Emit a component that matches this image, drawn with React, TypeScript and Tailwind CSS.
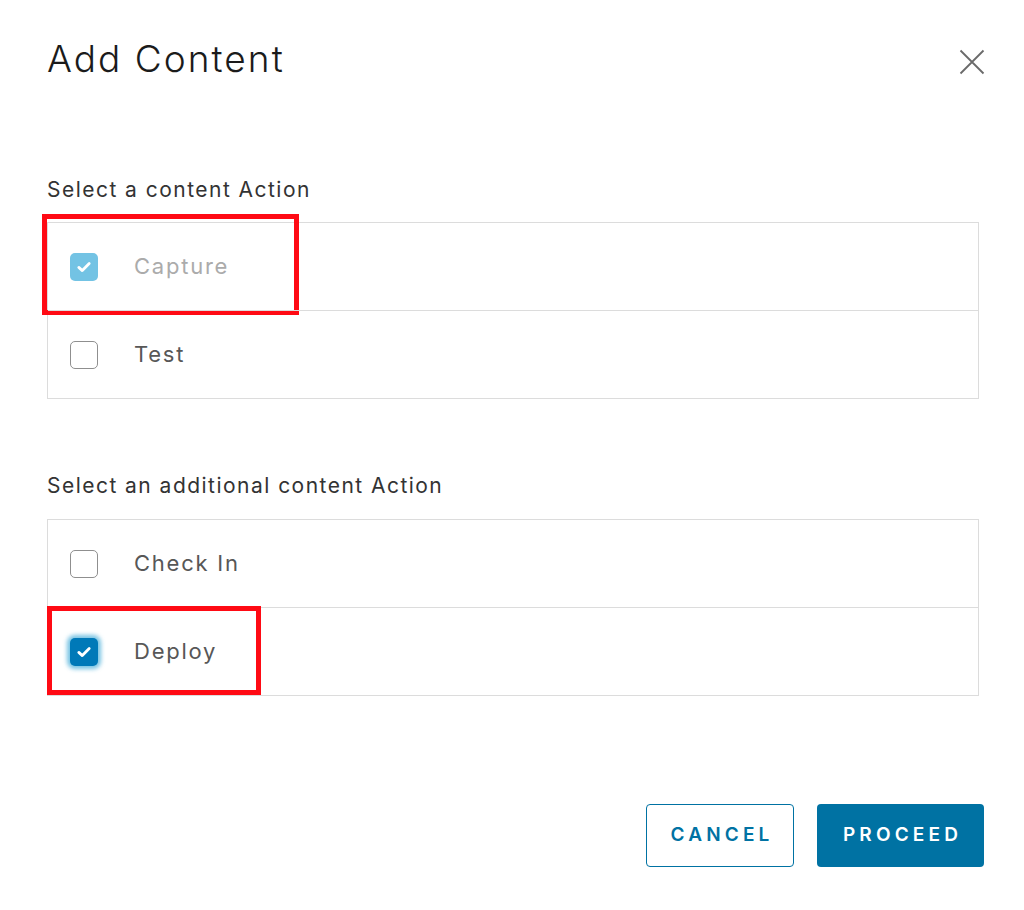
import React, { useState } from "react";

type Option = {
  label: string;
  checked: boolean;
  disabled?: boolean;
  highlight?: "capture" | "deploy";
};

const CheckIcon: React.FC = () => (
  <svg width="16" height="16" viewBox="0 0 16 16" fill="none">
    <path
      d="M2.8 8.4 L6.3 11.6 L13.2 4.6"
      stroke="white"
      strokeWidth="2.8"
      strokeLinecap="round"
      strokeLinejoin="round"
    />
  </svg>
);

const Checkbox: React.FC<{ checked: boolean; disabled?: boolean; focused?: boolean }> = ({
  checked,
  disabled,
  focused,
}) => {
  if (!checked) {
    return (
      <span className="w-[28px] h-[28px] rounded-[5px] border-[1.5px] border-[#8f8f8f] bg-white shrink-0" />
    );
  }
  return (
    <span
      className={
        disabled
          ? "w-[28px] h-[28px] rounded-[5px] bg-[#73c3e4] flex items-center justify-center shrink-0"
          : focused
          ? "w-[28px] h-[28px] rounded-[5px] bg-[#0079b8] flex items-center justify-center shrink-0 shadow-[0_0_4px_3px_rgba(73,175,217,0.75)]"
          : "w-[28px] h-[28px] rounded-[5px] bg-[#0079b8] flex items-center justify-center shrink-0"
      }
    >
      <CheckIcon />
    </span>
  );
};

const OptionList: React.FC<{
  options: Option[];
  onToggle: (i: number) => void;
}> = ({ options, onToggle }) => (
  <div className="border border-[#dcdcdc]">
    {options.map((opt, i) => (
      <div
        key={opt.label}
        onClick={() => !opt.disabled && onToggle(i)}
        className={
          i > 0
            ? "relative h-[88px] flex items-center pl-[22px] border-t border-[#dcdcdc] cursor-pointer"
            : "relative h-[87px] flex items-center pl-[22px] cursor-pointer"
        }
      >
        <Checkbox
          checked={opt.checked}
          disabled={opt.disabled}
          focused={opt.highlight === "deploy"}
        />
        <span
          className={
            opt.disabled
              ? "ml-[36px] text-[22px] tracking-[0.08em] text-[#ababab]"
              : "ml-[36px] text-[22px] tracking-[0.08em] text-[#575757]"
          }
        >
          {opt.label}
        </span>
        {opt.highlight === "capture" && (
          <div className="absolute left-[-6px] top-[-9px] w-[257px] h-[101px] border-[5px] border-[#ff0a14] pointer-events-none" />
        )}
        {opt.highlight === "deploy" && (
          <div className="absolute left-[-1px] top-[-2px] w-[214px] h-[89px] border-[5px] border-[#ff0a14] pointer-events-none" />
        )}
      </div>
    ))}
  </div>
);

export default function App() {
  const [primary, setPrimary] = useState<Option[]>([
    { label: "Capture", checked: true, disabled: true, highlight: "capture" },
    { label: "Test", checked: false },
  ]);
  const [additional, setAdditional] = useState<Option[]>([
    { label: "Check In", checked: false },
    { label: "Deploy", checked: true, highlight: "deploy" },
  ]);

  const toggle =
    (list: Option[], set: (o: Option[]) => void) => (i: number) =>
      set(list.map((o, j) => (j === i ? { ...o, checked: !o.checked } : o)));

  return (
    <div
      className="w-[1024px] h-[910px] bg-white overflow-hidden"
      style={{ fontFamily: "Inter, 'Noto Sans', sans-serif" }}
    >
      <div className="flex justify-between items-start pl-[47px] pr-[38px] pt-[36px]">
        <h1 className="text-[37px] leading-[46px] font-light tracking-[0.055em] text-[#1b1b1b]">
          Add Content
        </h1>
        <button className="mt-[12px] w-[28px] h-[28px] flex items-center justify-center">
          <svg width="26" height="26" viewBox="0 0 26 26" fill="none">
            <path d="M1.5 1.5 L24.5 24.5 M24.5 1.5 L1.5 24.5" stroke="#6a6a6a" strokeWidth="1.8" />
          </svg>
        </button>
      </div>

      <div className="ml-[47px] w-[932px]">
        <p className="mt-[96px] text-[21px] leading-[24px] tracking-[0.07em] text-[#333333]">
          Select a content Action
        </p>
        <div className="mt-[20px]">
          <OptionList options={primary} onToggle={toggle(primary, setPrimary)} />
        </div>

        <p className="mt-[75px] text-[21px] leading-[24px] tracking-[0.07em] text-[#333333]">
          Select an additional content Action
        </p>
        <div className="mt-[21px]">
          <OptionList options={additional} onToggle={toggle(additional, setAdditional)} />
        </div>
      </div>

      <div className="flex justify-end gap-[23px] pr-[40px] mt-[108px]">
        <button className="w-[148px] h-[63px] pl-[4px] rounded-[4px] border-[1.5px] border-[#0072a3] text-[#0072a3] text-[19px] font-semibold tracking-[0.22em]">
          CANCEL
        </button>
        <button className="w-[167px] h-[63px] pl-[4px] rounded-[4px] bg-[#0072a3] text-white text-[19px] font-semibold tracking-[0.22em]">
          PROCEED
        </button>
      </div>
    </div>
  );
}
